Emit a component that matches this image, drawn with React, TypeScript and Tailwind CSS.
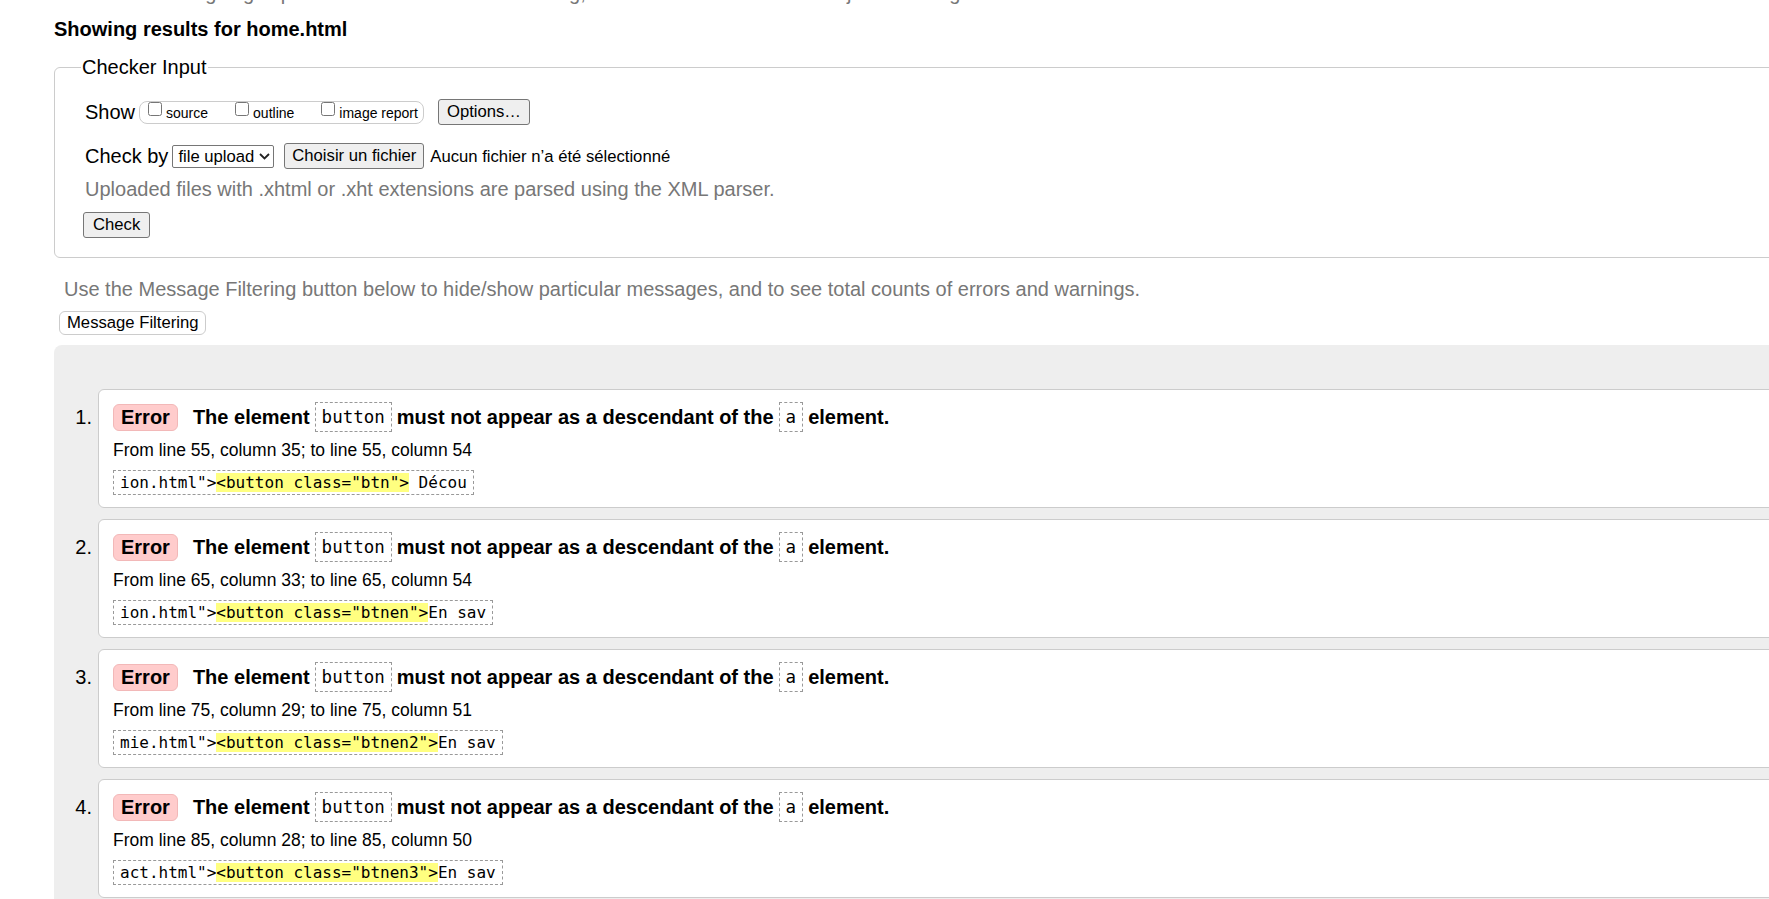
const messages = [
    { line: 55, from: 35, to: 54, before: 'ion.html">', hl: '<button class="btn">', after: " Décou" },
    { line: 65, from: 33, to: 54, before: 'ion.html">', hl: '<button class="btnen">', after: "En sav" },
    { line: 75, from: 29, to: 51, before: 'mie.html">', hl: '<button class="btnen2">', after: "En sav" },
    { line: 85, from: 28, to: 50, before: 'act.html">', hl: '<button class="btnen3">', after: "En sav" },
];

const btn =
    "h-[26px] px-[7px] rounded-[3px] border border-[#767676] bg-[#efefef] text-[16.67px] leading-none text-black";

const InlineCode = ({ children }: { children: string }) => (
    <code className="flex h-[30px] items-center border border-dashed border-[#999] px-[6px] font-['DejaVu_Sans_Mono',monospace] text-[17.5px] font-normal">
        {children}
    </code>
);

const Message = ({ index, m }: { index: number; m: (typeof messages)[number] }) => (
    <li className="mb-[11px] flex">
        <div className="w-[44px] shrink-0 pr-[6px] pt-[13px] text-right text-[20px] leading-[30px]">
            {index}.
        </div>
        <div className="flex-1 rounded-l-[6px] border border-[#ccc] bg-white pl-[14px] pt-[12px] pb-[12px]">
            {/* titre du message */}
            <div className="flex h-[30px] items-center text-[20px] font-bold">
                <span className="mr-[15px] flex h-[27px] items-center rounded-[6px] border border-[#f2b8b8] bg-[#ffcccc] px-[7px]">
                    Error
                </span>
                <span>The element</span>
                <span className="mx-[5px]">
                    <InlineCode>button</InlineCode>
                </span>
                <span>must not appear as a descendant of the</span>
                <span className="mx-[5px]">
                    <InlineCode>a</InlineCode>
                </span>
                <span>element.</span>
            </div>
            <p className="mt-[8px] text-[17.5px] leading-[20px]">
                From line {m.line}, column {m.from}; to line {m.line}, column {m.to}
            </p>
            <div className="mt-[10px] h-[25px] w-fit whitespace-pre border border-dashed border-[#999] px-[6px] font-['DejaVu_Sans_Mono',monospace] text-[16px] leading-[23px]">
                {m.before}
                <span className="bg-[#ffff80]">{m.hl}</span>
                {m.after}
            </div>
        </div>
    </li>
);

const App = () => {
    return (
        <div className="h-[899px] w-[1769px] overflow-hidden bg-white font-['Liberation_Sans',Arial,sans-serif] text-black">
            <div className="flex w-[1900px] flex-col pl-[54px]">
                <p className="-mt-[19px] text-[20px] leading-[24px] text-[#777]">
                    This tool is an ongoing experiment in better HTML checking, and its behavior remains subject to change
                </p>
                <h2 className="mt-[12px] text-[20px] font-bold leading-[24px]">Showing results for home.html</h2>

                <fieldset className="mt-[14px] rounded-[6px] border border-[#ccc] pl-[30px] pt-[20px] pb-[19px]">
                    <legend className="-ml-[4px] px-[1px] text-[20px] leading-[24px]">Checker Input</legend>

                    <div className="flex h-[26px] items-center">
                        <span className="text-[20px] leading-[24px]">Show</span>
                        <div className="ml-[4px] flex h-[23px] items-start gap-[27px] rounded-[8px] border border-[#ccc] pl-[8px] pr-[5px] text-[14px]">
                            {["source", "outline", "image report"].map((label) => (
                                <label key={label} className="flex items-start gap-[4px]">
                                    <input type="checkbox" className="h-[14px] w-[14px]" />
                                    <span className="mt-[3px] leading-[16px]">{label}</span>
                                </label>
                            ))}
                        </div>
                        <button type="button" className={`ml-[14px] ${btn} px-[8px]`}>
                            Options…
                        </button>
                    </div>

                    <div className="mt-[18px] flex h-[26px] items-center">
                        <span className="text-[20px] leading-[24px]">Check by</span>
                        <div className="ml-[4px] flex h-[23px] items-center gap-[5px] rounded-[2px] border border-[#767676] pl-[5px] pr-[3px] text-[16.67px]">
                            <span>file upload</span>
                            <svg width="11" height="7" viewBox="0 0 11 7" fill="none">
                                <polyline points="1,1 5.5,5.5 10,1" stroke="#222" strokeWidth="1.8" />
                            </svg>
                        </div>
                        <button type="button" className={`ml-[10px] ${btn}`}>
                            Choisir un fichier
                        </button>
                        <span className="ml-[6px] text-[16.67px]">Aucun fichier n’a été sélectionné</span>
                    </div>

                    <p className="mt-[8px] text-[20px] leading-[24px] text-[#777]">
                        Uploaded files with .xhtml or .xht extensions are parsed using the XML parser.
                    </p>

                    <button type="button" className={`-ml-[2px] mt-[11px] block ${btn} px-[9px]`}>
                        Check
                    </button>
                </fieldset>

                <p className="ml-[10px] mt-[19px] text-[20px] leading-[24px] text-[#777]">
                    Use the Message Filtering button below to hide/show particular messages, and to see total counts of errors and warnings.
                </p>
                <button
                    type="button"
                    className="ml-[5px] mt-[10px] h-[24px] self-start rounded-[6px] border border-[#ccc] bg-white px-[7px] text-[16.67px] leading-none"
                >
                    Message Filtering
                </button>

                <div className="mt-[10px] rounded-tl-[8px] bg-[#eeeeee] pt-[44px]">
                    <ol>
                        {messages.map((m, i) => (
                            <Message key={m.line} index={i + 1} m={m} />
                        ))}
                    </ol>
                </div>
            </div>
        </div>
    );
};

export default App;
